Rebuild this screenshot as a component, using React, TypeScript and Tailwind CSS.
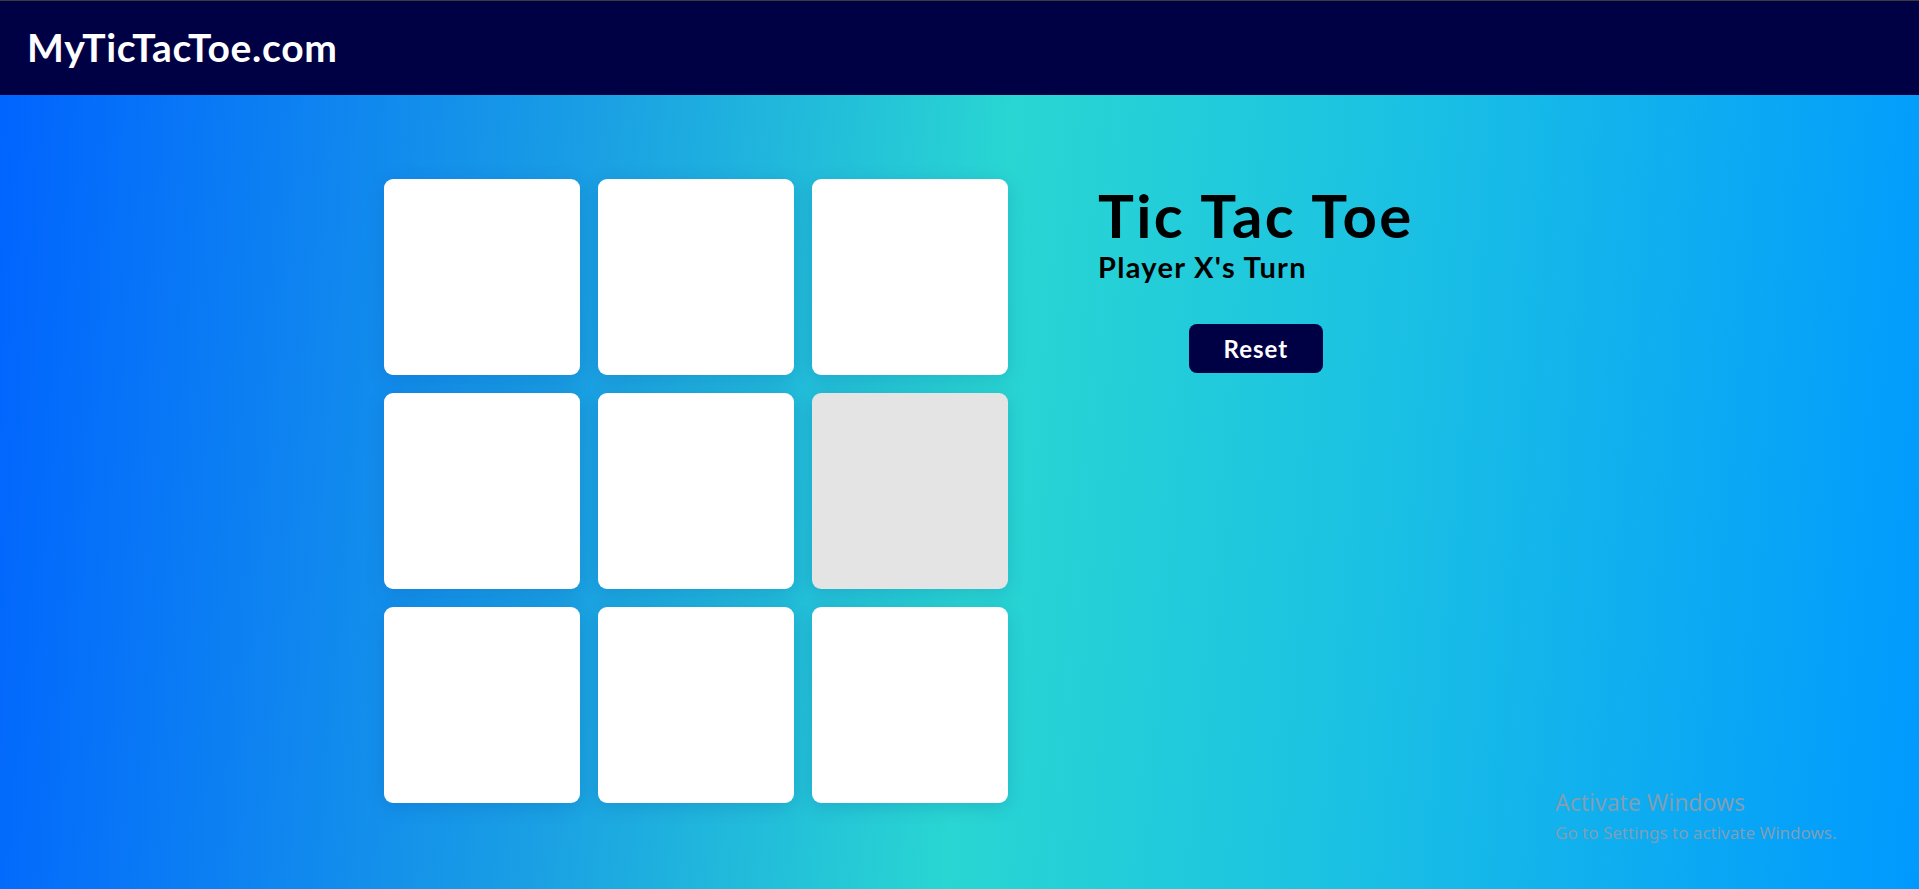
import { useState } from "react";

const CELLS = Array.from({ length: 9 }, (_, i) => i);

export default function App() {
  const [board, setBoard] = useState<(string | null)[]>(Array(9).fill(null));
  const [turn, setTurn] = useState<"X" | "O">("X");

  const play = (i: number) => {
    if (board[i]) return;
    const next = [...board];
    next[i] = turn;
    setBoard(next);
    setTurn(turn === "X" ? "O" : "X");
  };

  const reset = () => {
    setBoard(Array(9).fill(null));
    setTurn("X");
  };

  return (
    <div
      className="relative flex h-[889px] w-full flex-col overflow-hidden"
      style={{ fontFamily: "Lato, 'Noto Sans', sans-serif" }}
    >
      <header className="flex h-[95px] shrink-0 items-center border-t border-[#3c3c3c] bg-[#000045] px-[27px]">
        <span className="pb-[2px] text-[39px] font-bold tracking-[0.7px] text-white">
          MyTicTacToe.com
        </span>
      </header>

      <main className="flex flex-1 justify-center bg-[linear-gradient(95deg,#0064ff_0%,#1a9fe4_30%,#29d6d2_51%,#1cc2e2_70%,#0099ff_100%)] pt-[84px]">
        <div className="grid h-fit grid-cols-[repeat(3,196px)] gap-[18px]">
          {CELLS.map((i) => (
            <button
              key={i}
              onClick={() => play(i)}
              className={`flex h-[196px] w-[196px] items-center justify-center rounded-[9px] text-[96px] font-bold text-[#000045] shadow-[0_4px_18px_rgba(0,60,140,0.18)] ${
                i === 5 ? "bg-[#e4e4e4]" : "bg-white hover:bg-[#e4e4e4]"
              }`}
            >
              {board[i]}
            </button>
          ))}
        </div>

        <div className="ml-[90px] flex w-[437px] flex-col">
          <div className="flex w-fit flex-col">
            <h1 className="mt-[1px] text-[60px] leading-[70px] font-bold tracking-[2.4px] text-black">
              Tic Tac Toe
            </h1>
            <p className="mt-[0px] text-[29px] leading-[34px] font-bold tracking-[1.3px] text-black">
              Player {turn}'s Turn
            </p>
            <button
              onClick={reset}
              className="mt-[40px] h-[49px] w-[134px] self-center rounded-[8px] bg-[#000045] text-[24px] font-bold tracking-[1px] text-white"
            >
              Reset
            </button>
          </div>
        </div>
      </main>

      <div
        className="pointer-events-none absolute left-[1555px] top-[787px] text-[#7e9fb6]"
        style={{ fontFamily: "'Noto Sans', 'Open Sans', sans-serif" }}
      >
        <div className="text-[23px] leading-[30px]">Activate Windows</div>
        <div className="mt-[4px] text-[17px] leading-[24px]">Go to Settings to activate Windows.</div>
      </div>
    </div>
  );
}
